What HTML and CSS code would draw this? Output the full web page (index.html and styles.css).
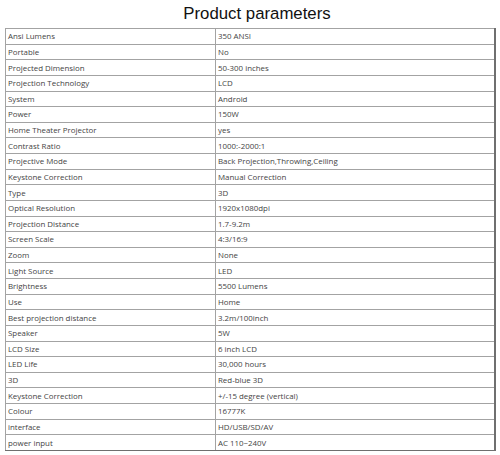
FILE: index.html
```html
<!DOCTYPE html>
<html>
<head>
<meta charset="utf-8">
<link rel="stylesheet" href="styles.css">
</head>
<body>
<h1 class="title">Product parameters</h1>
<table class="params">
<colgroup><col class="c1"><col class="c2"></colgroup>
<tbody>
<tr><td>Ansi Lumens</td><td>350 ANSI</td></tr>
<tr><td>Portable</td><td>No</td></tr>
<tr><td>Projected Dimension</td><td>50-300 inches</td></tr>
<tr><td>Projection Technology</td><td>LCD</td></tr>
<tr><td>System</td><td>Android</td></tr>
<tr><td>Power</td><td>150W</td></tr>
<tr><td>Home Theater Projector</td><td>yes</td></tr>
<tr><td>Contrast Ratio</td><td>1000:-2000:1</td></tr>
<tr><td>Projective Mode</td><td>Back Projection,Throwing,Ceiling</td></tr>
<tr><td>Keystone Correction</td><td>Manual Correction</td></tr>
<tr><td>Type</td><td>3D</td></tr>
<tr><td>Optical Resolution</td><td>1920x1080dpi</td></tr>
<tr><td>Projection Distance</td><td>1.7-9.2m</td></tr>
<tr><td>Screen Scale</td><td>4:3/16:9</td></tr>
<tr><td>Zoom</td><td>None</td></tr>
<tr><td>Light Source</td><td>LED</td></tr>
<tr><td>Brightness</td><td>5500 Lumens</td></tr>
<tr><td>Use</td><td>Home</td></tr>
<tr><td>Best projection distance</td><td>3.2m/100inch</td></tr>
<tr><td>Speaker</td><td>5W</td></tr>
<tr><td>LCD Size</td><td>6 inch LCD</td></tr>
<tr><td>LED Life</td><td>30,000 hours</td></tr>
<tr><td>3D</td><td>Red-blue 3D</td></tr>
<tr><td>Keystone Correction</td><td>+/-15 degree (vertical)</td></tr>
<tr><td>Colour</td><td>16777K</td></tr>
<tr><td>interface</td><td>HD/USB/SD/AV</td></tr>
<tr><td>power input</td><td>AC 110~240V</td></tr>
</tbody>
</table>
</body>
</html>
```

FILE: styles.css
```css
html, body {
  margin: 0;
  padding: 0;
  background: #fff;
}
body {
  width: 500px;
  height: 455px;
  overflow: hidden;
}
.title {
  margin: 0;
  height: 28px;
  padding: 4px 0 0 14px;
  box-sizing: border-box;
  text-align: center;
  font-family: "Liberation Sans", Arial, sans-serif;
  font-weight: normal;
  font-size: 16.8px;
  line-height: 20px;
  color: #111;
}
.params {
  margin-left: 5px;
  width: 491px;
  table-layout: fixed;
  border-collapse: collapse;
  font-family: "Open Sans", sans-serif;
  font-size: 7.9px;
  color: #444;
}
.c1 { width: 210px; }
.params tr { height: 15.63px; }
.params td {
  border: 1px solid #a3a3a3;
  padding: 0 2px;
  line-height: 12px;
  white-space: nowrap;
  vertical-align: middle;
}
.params td:last-child {
  border-right: 2px solid #6f6f6f;
}
.params tr:last-child td {
  border-bottom: 1px solid #6f6f6f;
}
```
